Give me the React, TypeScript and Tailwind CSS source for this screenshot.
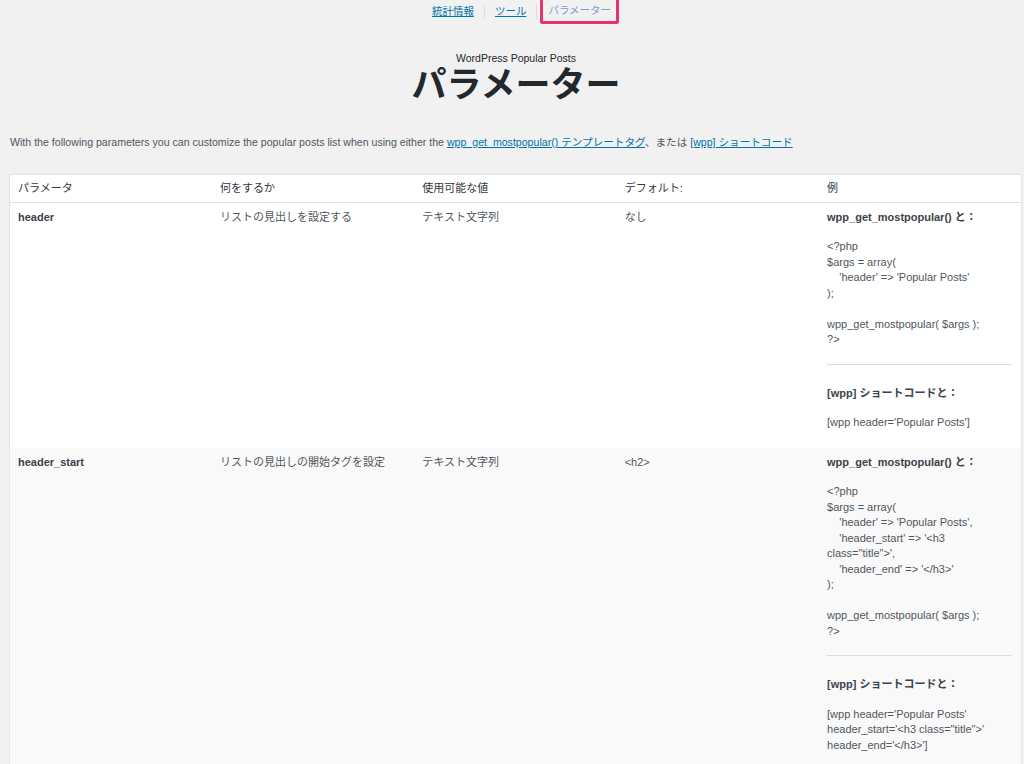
const font = "font-['Liberation_Sans','Noto_Sans_CJK_JP',sans-serif]";

type Row = {
  name: string;
  what: string;
  values: string;
  def: string;
  php: string[];
  shortcode: string[];
};

const rows: Row[] = [
  {
    name: 'header',
    what: 'リストの見出しを設定する',
    values: 'テキスト文字列',
    def: 'なし',
    php: ["<?php", "$args = array(", "\u00a0\u00a0\u00a0\u00a0'header' => 'Popular Posts'", ");"],
    shortcode: ["[wpp header='Popular Posts']"],
  },
  {
    name: 'header_start',
    what: 'リストの見出しの開始タグを設定',
    values: 'テキスト文字列',
    def: '<h2>',
    php: [
      "<?php",
      "$args = array(",
      "\u00a0\u00a0\u00a0\u00a0'header' => 'Popular Posts',",
      "\u00a0\u00a0\u00a0\u00a0'header_start' => '<h3 class=\"title\">',",
      "\u00a0\u00a0\u00a0\u00a0'header_end' => '</h3>'",
      ");",
    ],
    shortcode: ["[wpp header='Popular Posts' header_start='<h3 class=\"title\">' header_end='</h3>']"],
  },
];

function Example({ row }: { row: Row }) {
  return (
    <div>
      <p className="font-bold text-[#3c434a]">wpp_get_mostpopular() と：</p>
      <p className="mt-[14px]">
        {row.php.map((l, i) => (
          <span key={i}>
            {l}
            <br />
          </span>
        ))}
        <br />
        wpp_get_mostpopular( $args );
        <br />
        ?&gt;
      </p>
      <hr className="mt-[16px] mb-[21px] border-t border-[#dcdcdc] mr-[1px]" />
      <p className="font-bold text-[#3c434a]">[wpp] ショートコードと：</p>
      <p className="mt-[14px]">{row.shortcode.join(' ')}</p>
    </div>
  );
}

export default function App() {
  return (
    <div className={`${font} min-h-[764px] bg-[#f1f1f1] text-[#50575e] pb-10`}>
      {/* tabs */}
      <nav className="flex justify-center items-center h-[24px] text-[10.5px] pl-[22px]">
        <a href="#" className="text-[#0073aa] underline px-[5px]">統計情報</a>
        <span className="w-px h-[14px] bg-[#dcdcdc] mx-[5px]" />
        <a href="#" className="text-[#0073aa] underline px-[5px]">ツール</a>
        <span className="w-px h-[14px] bg-[#dcdcdc] ml-[5px] mr-[3px]" />
        <span className="h-[24px] px-[5px] flex items-center border-[3px] border-t-0 border-[#e8336e] rounded-b-[3px] text-[#7d9fc8]">
          パラメーター
        </span>
      </nav>

      {/* title */}
      <header className="text-center text-[#23282d] mt-[27px] pl-[8px]">
        <div className="text-[10.5px] leading-[14px]">WordPress Popular Posts</div>
        <h1 className="text-[35px] leading-[40px] font-bold">パラメーター</h1>
      </header>

      <p className="text-[10.6px] ml-[10px] mt-[30px]">
        With the following parameters you can customize the popular posts list when using either the{' '}
        <a href="#" className="text-[#0073aa] underline">wpp_get_mostpopular() テンプレートタグ</a>、または{' '}
        <a href="#" className="text-[#0073aa] underline">[wpp] ショートコード</a>
      </p>

      <div className="ml-[9px] mr-[2px] mt-[23px]">
        <table className="w-full table-fixed border border-[#e5e5e5] bg-white shadow-[0_1px_1px_rgba(0,0,0,0.04)] text-[11px] leading-[15.5px]">
          <thead>
            <tr className="border-b border-[#e1e1e1] text-[#32373c] text-[11px]">
              <th className="text-left font-normal px-[8px] h-[28px]">パラメータ</th>
              <th className="text-left font-normal px-[8px]">何をするか</th>
              <th className="text-left font-normal px-[8px]">使用可能な値</th>
              <th className="text-left font-normal px-[8px]">デフォルト:</th>
              <th className="text-left font-normal px-[8px]">例</th>
            </tr>
          </thead>
          <tbody>
            {rows.map((row, i) => (
              <tr key={row.name} className={i % 2 ? 'bg-[#f9f9f9]' : 'bg-white'}>
                <td className="align-top px-[8px] pt-[7px] pb-[17px] font-bold text-[#3c434a]">{row.name}</td>
                <td className="align-top px-[8px] pt-[7px]">{row.what}</td>
                <td className="align-top px-[8px] pt-[7px]">{row.values}</td>
                <td className="align-top px-[8px] pt-[7px]">{row.def}</td>
                <td className="align-top pl-[8px] pr-[8px] pt-[7px] pb-[17px]">
                  <Example row={row} />
                </td>
              </tr>
            ))}
          </tbody>
        </table>
      </div>
    </div>
  );
}
